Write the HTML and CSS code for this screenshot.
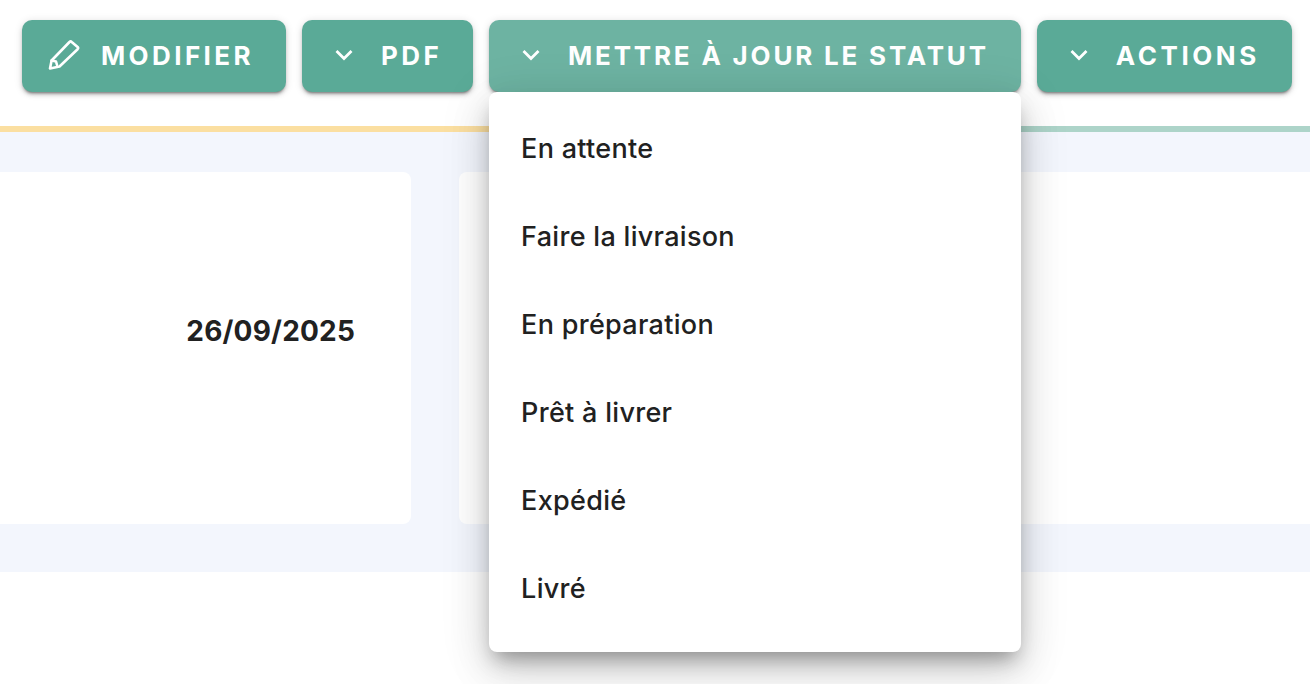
FILE: index.html
```html
<!DOCTYPE html>
<html lang="fr">
<head>
    <meta charset="UTF-8">
    <meta name="viewport" content="width=device-width, initial-scale=1.0">
    <title>Commande</title>
    <link rel="stylesheet" href="styles.css">
</head>
<body>

<div class="toolbar">
    <button class="btn btn-edit">
        <svg class="icon-edit" viewBox="0 0 32 30" fill="none" stroke="currentColor" stroke-width="2.6" stroke-linejoin="round" stroke-linecap="round">
            <path d="M2 28.5 L3.6 20.5 L21.5 2 a1.6 1.6 0 0 1 2.2 0 L29.6 7 a1.6 1.6 0 0 1 0 2.2 L11.5 26.5 Z"/>
            <path d="M3.6 20.5 L8 21.5 L9 25"/>
        </svg>
        MODIFIER
    </button>
    <button class="btn btn-pdf">
        <svg class="icon-chevron" viewBox="0 0 18 12" fill="none" stroke="currentColor" stroke-width="2.8"><path d="M1.5 2 L9 9.5 L16.5 2"/></svg>
        PDF
    </button>
    <div class="menu-wrap">
        <button class="btn btn-open">
            <svg class="icon-chevron" viewBox="0 0 18 12" fill="none" stroke="currentColor" stroke-width="2.8"><path d="M1.5 2 L9 9.5 L16.5 2"/></svg>
            METTRE À JOUR LE STATUT
        </button>
        <ul class="menu">
            <li>En attente</li>
            <li>Faire la livraison</li>
            <li>En préparation</li>
            <li>Prêt à livrer</li>
            <li>Expédié</li>
            <li>Livré</li>
        </ul>
    </div>
    <button class="btn btn-actions">
        <svg class="icon-chevron" viewBox="0 0 18 12" fill="none" stroke="currentColor" stroke-width="2.8"><path d="M1.5 2 L9 9.5 L16.5 2"/></svg>
        ACTIONS
    </button>
</div>

<div class="progress">
    <div class="progress-done"></div>
    <div class="progress-todo"></div>
</div>

<div class="content">
    <div class="card card-date">
        <span class="date">26/09/2025</span>
    </div>
    <div class="card card-main"></div>
</div>

</body>
</html>
```

FILE: styles.css
```css
html, body { margin: 0; height: 684px; overflow: hidden; background-color: #fff; }
body { font-family: Inter, "Noto Sans", sans-serif; color: #212121; }

.toolbar { display: flex; gap: 16px; padding: 20px 0 0 22px; height: 126px; box-sizing: border-box; }

.btn {
    display: flex;
    align-items: center;
    height: 72px;
    padding: 0 32px 2px 33px;
    gap: 28px;
    border: none;
    border-radius: 10px;
    background-color: #5aaa97;
    color: #fff;
    font-family: inherit;
    font-size: 26px;
    font-weight: 700;
    letter-spacing: 3.4px;
    white-space: nowrap;
    box-shadow: 0 3px 3px -2px rgba(0,0,0,0.45), 0 3px 4px rgba(0,0,0,0.14), 0 1px 8px rgba(0,0,0,0.12);
}
.btn-edit { padding-left: 26px; gap: 21px; }
.btn-pdf { padding-right: 31px; }
.btn-open { background-color: #6db3a2; letter-spacing: 2.8px; }
.btn-actions { letter-spacing: 3.55px; }

.icon-edit { width: 32px; height: 30px; }
.icon-chevron { width: 18px; height: 12px; }

.menu-wrap { position: relative; }
.menu {
    position: absolute;
    top: 72px;
    left: 0;
    z-index: 2;
    width: 532px;
    height: 560px;
    box-sizing: border-box;
    margin: 0;
    padding: 12px 0 20px;
    list-style: none;
    background-color: #fff;
    border-radius: 8px;
    box-shadow: 0 12px 20px -6px rgba(0,0,0,0.35), 0 20px 40px 2px rgba(0,0,0,0.12), 0 8px 50px 6px rgba(0,0,0,0.08);
}
.menu li { display: flex; align-items: center; height: 88px; padding-left: 32px; font-size: 27px; font-weight: 500; letter-spacing: 0.3px; }

.progress { display: flex; height: 6px; }
.progress-done { width: 755px; background-color: #fbdfa1; }
.progress-todo { flex: 1; background-color: #add4c9; }

.content { display: flex; gap: 48px; height: 440px; box-sizing: border-box; padding: 40px 0 48px; background-color: #f3f6fd; }
.card { background-color: #fff; border-radius: 8px; }
.card-date { display: flex; justify-content: flex-end; width: 411px; box-sizing: border-box; padding: 140px 56px 0 0; border-radius: 0 8px 8px 0; }
.card-main { flex: 1; border-radius: 8px 0 0 8px; }
.date { font-size: 28px; font-weight: 700; line-height: 38px; letter-spacing: 0.2px; }
```
